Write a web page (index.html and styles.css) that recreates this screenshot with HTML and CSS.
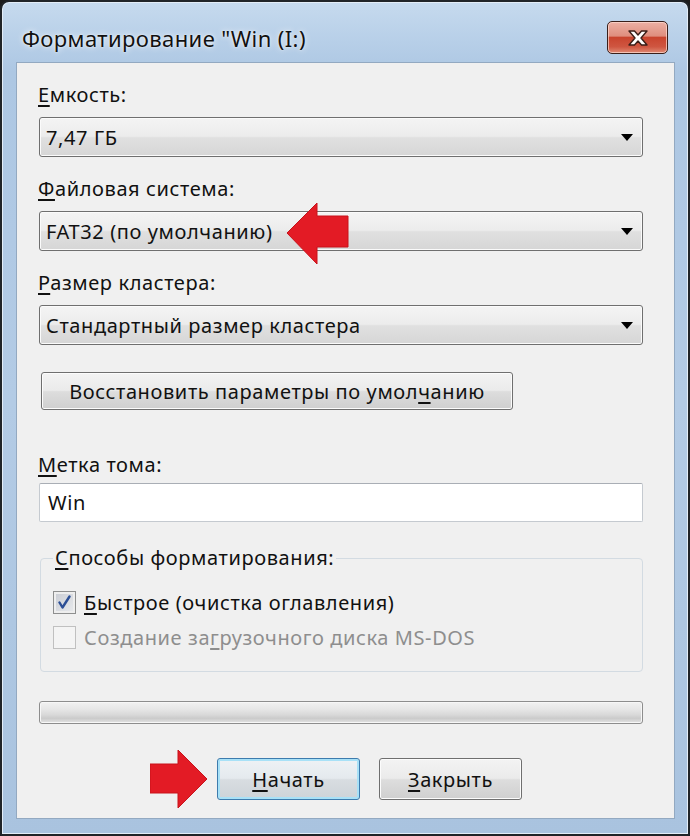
FILE: index.html
```html
<!DOCTYPE html>
<html lang="ru">
<head>
<meta charset="utf-8">
<title>Форматирование</title>
<link rel="stylesheet" href="styles.css">
</head>
<body>
<div class="window">
  <div class="titlebar">
    <span class="title">Форматирование "Win (I:)</span>
    <div class="close-btn">
      <svg class="close-x" viewBox="0 0 24 18" width="24" height="18">
        <path d="M3 2 L8.5 2 L12 6 L15.5 2 L21 2 L15 9 L21 16 L15.5 16 L12 12 L8.5 16 L3 16 L9 9 Z" fill="#ffffff" stroke="#3b1d17" stroke-width="1.4" stroke-linejoin="round"/>
      </svg>
    </div>
  </div>
  <div class="panel">
    <div class="label"><u>Е</u>мкость:</div>
    <div class="combo"><span>7,47 ГБ</span><i class="caret"></i></div>

    <div class="label"><u>Ф</u>айловая система:</div>
    <div class="combo"><span>FAT32 (по умолчанию)</span><i class="caret"></i></div>

    <div class="label"><u>Р</u>азмер кластера:</div>
    <div class="combo"><span>Стандартный размер кластера</span><i class="caret"></i></div>

    <div class="btn restore">Восстановить параметры по умол<u>ч</u>анию</div>

    <div class="label label-gap"><u>М</u>етка тома:</div>
    <div class="input">Win</div>

    <fieldset class="group">
      <legend><u>С</u>пособы форматирования:</legend>
      <div class="check-row">
        <span class="checkbox checked">
          <svg viewBox="0 0 15 15" width="15" height="15"><path d="M2.5 7.5 L5.5 12.5 L12.5 1.5" fill="none" stroke="#2c4f96" stroke-width="2.4" stroke-linecap="round" stroke-linejoin="round"/></svg>
        </span>
        <span class="check-text"><u>Б</u>ыстрое (очистка оглавления)</span>
      </div>
      <div class="check-row disabled">
        <span class="checkbox"></span>
        <span class="check-text">Создание за<u>г</u>рузочного диска MS-DOS</span>
      </div>
    </fieldset>

    <div class="progress"></div>

    <div class="actions">
      <div class="btn action primary"><u>Н</u>ачать</div>
      <div class="btn action"><u>З</u>акрыть</div>
    </div>

    <svg class="arrow arrow-left" viewBox="0 0 64 64" width="64" height="64">
      <polygon points="2,32 32,2 32,15 63,15 63,46 32,46 32,63" fill="#e31b25" stroke="#c8121b" stroke-width="1"/>
    </svg>
    <svg class="arrow arrow-right" viewBox="0 0 58 58" width="58" height="58">
      <polygon points="0,14 28,14 28,0 57,29 28,58 28,43 0,43" fill="#e31b25" stroke="#c8121b" stroke-width="1"/>
    </svg>
  </div>
</div>
</body>
</html>
```

FILE: styles.css
```css
* { box-sizing: border-box; }

html, body {
  margin: 0;
  padding: 0;
  width: 690px;
  height: 836px;
  background: #1c1c1c;
  overflow: hidden;
}

body {
  font-family: "Noto Sans", "Open Sans", sans-serif;
  font-size: 20px;
  letter-spacing: 0.6px;
  color: #111111;
}

u { text-decoration: underline; text-underline-offset: 3px; text-decoration-thickness: 1.5px; }

.window {
  width: 690px;
  height: 836px;
  border: 2px solid #202428;
  border-radius: 9px 9px 2px 2px;
  background: linear-gradient(180deg, #c6daee 0px, #b7cfe8 40px, #adc7e3 70px, #b3cbe5 400px, #a9c3df 836px);
  box-shadow: inset 0 0 0 1px #e3edf7;
  display: flex;
  flex-direction: column;
  padding: 0 13px 15px 14px;
}

.titlebar {
  height: 60px;
  display: flex;
  justify-content: space-between;
  align-items: flex-start;
  padding-left: 6px;
}

.title {
  font-size: 22px;
  letter-spacing: 0.4px;
  line-height: 28px;
  margin-top: 22px;
  color: #111;
  text-shadow: 0 0 6px rgba(255,255,255,0.9), 0 0 2px rgba(255,255,255,0.8);
}

.close-btn {
  margin-top: 19px;
  margin-right: 7px;
  width: 61px;
  height: 33px;
  border: 1px solid #3a1f1a;
  border-radius: 5px;
  background: linear-gradient(180deg, #ecb0a4 0%, #df8e7e 45%, #c9442e 50%, #cf5641 80%, #e08a74 100%);
  box-shadow: inset 0 0 0 1px rgba(255,220,210,0.7);
  display: flex;
  align-items: center;
  justify-content: center;
}

.panel {
  position: relative;
  flex: 1;
  background: #f0f0f0;
  border: 1px solid #93a9c1;
  padding: 20px 31px 18px 22px;
  display: flex;
  flex-direction: column;
  align-items: stretch;
}

.label {
  height: 24px;
  line-height: 24px;
  margin-left: -1px;
  margin-bottom: 10px;
}

.label-gap { margin-top: 43px; margin-bottom: 6px; }

.combo {
  height: 40px;
  border: 1px solid #6f6f6f;
  border-radius: 3px;
  background: linear-gradient(180deg, #f4f4f4 0%, #ececec 48%, #e0e0e0 52%, #d6d6d6 100%);
  box-shadow: inset 0 0 0 1px #fbfbfb;
  display: flex;
  align-items: center;
  justify-content: space-between;
  padding: 0 9px 0 6px;
  margin-bottom: 20px;
}

.caret {
  width: 0;
  height: 0;
  border-left: 6px solid transparent;
  border-right: 6px solid transparent;
  border-top: 7px solid #000;
}

.btn {
  border: 1px solid #6f6f6f;
  border-radius: 3px;
  background: linear-gradient(180deg, #f3f3f3 0%, #ebebeb 48%, #dddddd 52%, #cfcfcf 100%);
  box-shadow: inset 0 0 0 1px #fcfcfc;
  display: flex;
  align-items: center;
  justify-content: center;
}

.restore {
  margin-top: 7px;
  margin-left: 2px;
  width: 472px;
  height: 38px;
}

.input {
  height: 39px;
  background: #ffffff;
  border: 1px solid #c5cad0;
  border-top-color: #a9aeb5;
  border-radius: 2px;
  line-height: 37px;
  padding-left: 8px;
}

.group {
  margin: 24px 0 0 1px;
  padding: 17px 10px 19px 12px;
  border: 1px solid #d3dbe2;
  border-radius: 4px;
  min-inline-size: 0;
}

.group legend {
  height: 24px;
  line-height: 24px;
  padding: 0 2px;
  margin-left: 0;
}

.check-row {
  height: 30px;
  display: flex;
  align-items: center;
  gap: 8px;
}

.check-row + .check-row { margin-top: 5px; }

.checkbox {
  width: 23px;
  height: 23px;
  border: 1px solid #8e8f8f;
  background: linear-gradient(135deg, #dcdcdc, #f6f6f6);
  box-shadow: inset 0 0 0 2px #f4f4f4;
  display: flex;
  align-items: center;
  justify-content: center;
}

.checkbox.checked {
  background: linear-gradient(135deg, #c9ccd3, #e9ebee);
  box-shadow: inset 0 0 0 2px #eeeeee;
}

.disabled .checkbox {
  border-color: #c0c0c0;
  background: #f4f4f4;
  box-shadow: none;
}

.disabled .check-text { color: #8e8e8e; }

.progress {
  margin-top: 29px;
  height: 23px;
  border: 1px solid #8d8d8d;
  border-radius: 3px;
  background: linear-gradient(180deg, #f2f2f2 0%, #e6e6e6 35%, #d9d9d9 60%, #cbcbcb 78%, #e4e4e4 100%);
  box-shadow: inset 0 0 0 1px #f7f7f7;
}

.actions {
  margin-top: 34px;
  padding-left: 178px;
  display: flex;
  gap: 19px;
}

.action {
  width: 143px;
  height: 42px;
}

.primary {
  border-color: #3d7bad;
  background: linear-gradient(180deg, #eef2f5 0%, #e5eaee 48%, #d8dde1 52%, #cdd3d8 100%);
  box-shadow: inset 0 0 0 2px #a8e1f7;
}

.arrow {
  position: absolute;
}

.arrow-left { left: 268px; top: 138px; }
.arrow-right { left: 133px; top: 687px; }
```
